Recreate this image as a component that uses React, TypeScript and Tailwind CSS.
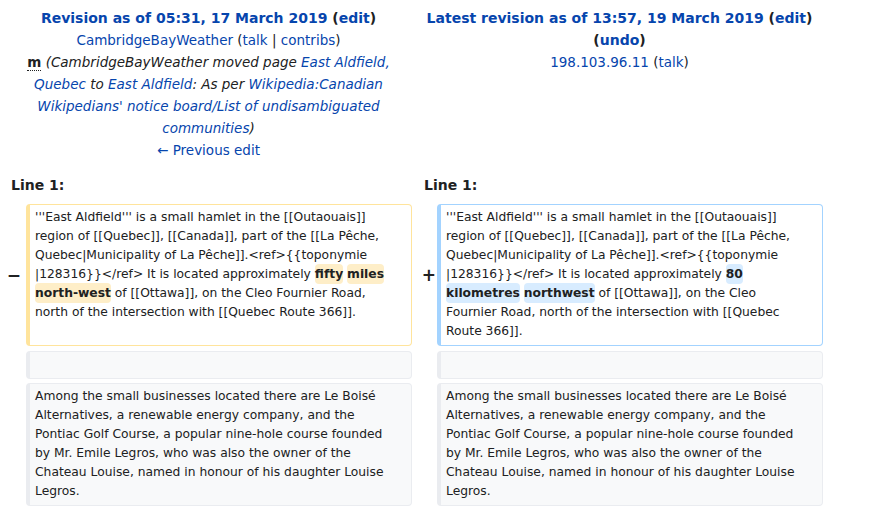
import React from "react";

const L = ({ children }: { children: React.ReactNode }) => (
  <a className="text-[#0645ad] no-underline">{children}</a>
);

const Del = ({ children }: { children: React.ReactNode }) => (
  <span className="font-bold bg-[#feeec8] rounded-[4px] py-[3px]">{children}</span>
);
const Add = ({ children }: { children: React.ReactNode }) => (
  <span className="font-bold bg-[#d8ecff] rounded-[4px] py-[3px]">{children}</span>
);

const boxBase =
  "border border-l-4 rounded-[4px] pl-[5px] pr-[14px] pt-[3px] pb-[4px] text-[12.3px] leading-[19px] text-[#202122]";

export default function App() {
  return (
    <div className="w-[874px] h-[512px] overflow-hidden bg-white text-[#202122] font-['DejaVu_Sans',sans-serif]">
      <div className="grid grid-cols-[17px_386px_17px_386px] gap-x-[4px] pl-[5px] pt-[7px]">
        {/* headers */}
        <div className="col-span-2 text-center text-[13.5px] leading-[22px] px-[6px]">
          <div className="font-bold text-[14px]">
            <L>Revision as of 05:31, 17 March 2019</L> (<L>edit</L>)
          </div>
          <div>
            <L>CambridgeBayWeather</L> (<L>talk</L> | <L>contribs</L>)
          </div>
          <div>
            <abbr className="font-bold no-underline border-b border-dotted border-[#202122]">m</abbr>{" "}
            <span className="italic">
              (CambridgeBayWeather moved page <L>East Aldfield, Quebec</L> to <L>East Aldfield</L>: As per{" "}
              <L>Wikipedia:Canadian Wikipedians' notice board/List of undisambiguated communities</L>)
            </span>
          </div>
          <div>
            <L>← Previous edit</L>
          </div>
        </div>
        <div className="col-span-2 text-center text-[13.5px] leading-[22px] px-[2px]">
          <div className="font-bold text-[14px]">
            <L>Latest revision as of 13:57, 19 March 2019</L> (<L>edit</L>)
          </div>
          <div className="font-bold text-[14px]">
            (<L>undo</L>)
          </div>
          <div>
            <L>198.103.96.11</L> (<L>talk</L>)
          </div>
        </div>

        {/* line numbers */}
        <div className="col-span-2 font-bold text-[14px] leading-[22px] pl-[6px] mt-[13px] mb-[8px]">Line 1:</div>
        <div className="col-span-2 font-bold text-[14px] leading-[22px] pl-[8px] mt-[13px] mb-[8px]">Line 1:</div>

        {/* changed row */}
        <div className="flex items-center justify-end font-bold text-[17px] leading-none pr-[1px]">−</div>
        <div className={`${boxBase} border-[#ffe49c]`}>
          '''East Aldfield''' is a small hamlet in the [[Outaouais]] region of [[Quebec]], [[Canada]], part of the [[La Pêche, Quebec|Municipality of La Pêche]].&lt;ref&gt;{"{{"}toponymie |128316{"}}"}&lt;/ref&gt; It is located approximately{" "}
          <Del>fifty</Del> <Del>miles</Del> <Del>north-west</Del> of [[Ottawa]], on the Cleo Fournier Road, north of the intersection with [[Quebec Route 366]].
        </div>
        <div className="flex items-center justify-end font-bold text-[17px] leading-none -mr-[3px]">+</div>
        <div className={`${boxBase} border-[#a3d3ff]`}>
          '''East Aldfield''' is a small hamlet in the [[Outaouais]] region of [[Quebec]], [[Canada]], part of the [[La Pêche, Quebec|Municipality of La Pêche]].&lt;ref&gt;{"{{"}toponymie |128316{"}}"}&lt;/ref&gt; It is located approximately{" "}
          <Add>80</Add> <Add>kilometres</Add> <Add>northwest</Add> of [[Ottawa]], on the Cleo Fournier Road, north of the intersection with [[Quebec Route 366]].
        </div>

        {/* empty context row */}
        <div />
        <div className={`${boxBase} bg-[#f8f9fa] border-[#eaecf0] mt-[5px]`}>&nbsp;</div>
        <div />
        <div className={`${boxBase} bg-[#f8f9fa] border-[#eaecf0] mt-[5px]`}>&nbsp;</div>

        {/* context row */}
        <div />
        <div className={`${boxBase} bg-[#f8f9fa] border-[#eaecf0] mt-[4px]`}>
          Among the small businesses located there are Le Boisé Alternatives, a renewable energy company, and the Pontiac Golf Course, a popular nine-hole course founded by Mr. Emile Legros, who was also the owner of the Chateau Louise, named in honour of his daughter Louise Legros.
        </div>
        <div />
        <div className={`${boxBase} bg-[#f8f9fa] border-[#eaecf0] mt-[4px]`}>
          Among the small businesses located there are Le Boisé Alternatives, a renewable energy company, and the Pontiac Golf Course, a popular nine-hole course founded by Mr. Emile Legros, who was also the owner of the Chateau Louise, named in honour of his daughter Louise Legros.
        </div>
      </div>
    </div>
  );
}
